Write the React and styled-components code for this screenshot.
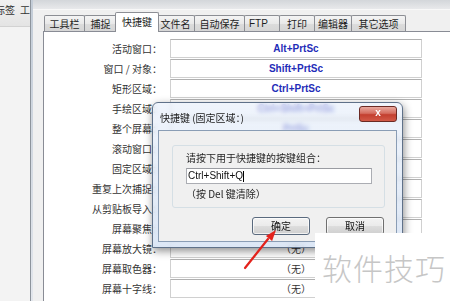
import React from "react";
import styled, { createGlobalStyle } from "styled-components";

const cjk = `"Noto Sans CJK SC", "Liberation Sans", sans-serif`;
const latin = `"Liberation Sans", "Noto Sans CJK SC", sans-serif`;

const GlobalStyle = createGlobalStyle`
  html, body { margin: 0; padding: 0; background: #f3f3f3; }
  body { font-family: ${cjk}; font-size: 10px; }
`;

const tabs = [
  { name: "工具栏", w: 41 },
  { name: "捕捉", w: 33 },
  { name: "快捷键", w: 44, active: true },
  { name: "文件名", w: 39 },
  { name: "自动保存", w: 51 },
  { name: "FTP", w: 36, left: true },
  { name: "打印", w: 36 },
  { name: "编辑器", w: 38 },
  { name: "其它选项", w: 55 },
];

const rows = [
  ["活动窗口：", "Alt+PrtSc"],
  ["窗口 / 对象：", "Shift+PrtSc"],
  ["矩形区域：", "Ctrl+PrtSc"],
  ["手绘区域：", "Ctrl+Shift+PrtSc"],
  ["整个屏幕：", "PrtSc"],
  ["滚动窗口：", null],
  ["固定区域：", null],
  ["重复上次捕捉：", null],
  ["从剪贴板导入：", null],
  ["屏幕聚焦：", null],
  ["屏幕放大镜：", null],
  ["屏幕取色器：", null],
  ["屏幕十字线：", null],
];

const Page = styled.div`
  position: relative;
  display: flex;
  width: 450px;
  height: 301px;
  overflow: hidden;
  background: #f3f3f3;
  font-family: ${cjk};
  font-size: 10px;
  color: #2a2a2a;
`;

const LeftStrip = styled.div`
  width: 30px;
  flex-shrink: 0;
  display: flex;
  flex-direction: column;
  overflow: hidden;
`;

const LeftBar = styled.div`
  height: 27px;
  box-sizing: border-box;
  padding-top: 3px;
  display: flex;
  gap: 5px;
  margin-left: -5px;
  white-space: nowrap;
  line-height: 14px;
  color: #333;
  background: linear-gradient(#f2f2f2, #e4e4e4);
  border-bottom: 1px solid #d2d2d2;
`;

const WindowEdge = styled.div`
  width: 2px;
  flex-shrink: 0;
  border-left: 1px solid #8d949c;
  background: linear-gradient(#c3ccd7, #e2e6ec);
`;

const Window = styled.div`
  flex: 1;
  min-width: 0;
  display: flex;
  flex-direction: column;
  background: #f0f0f0;
`;

const TitleBottom = styled.div`
  height: 9px;
  background: linear-gradient(#d3d6da, #e8e9eb);
  border-bottom: 1px solid #f8f8f8;
`;

const Face = styled.div`
  flex: 1;
  display: flex;
  flex-direction: column;
  padding-left: 10px;
`;

const TabStrip = styled.div`
  height: 21px;
  display: flex;
  align-items: flex-end;
  padding-left: 2px;
`;

const Tab = styled.div`
  position: relative;
  box-sizing: border-box;
  width: ${(p) => p.$w}px;
  height: ${(p) => (p.$active ? 20 : 16)}px;
  margin: ${(p) => (p.$active ? "0 -2px -1px -2px" : "0 0 0 -1px")};
  z-index: ${(p) => (p.$active ? 2 : 1)};
  border: 1px solid #8c8e94;
  border-bottom: none;
  border-radius: 2px 2px 0 0;
  background: ${(p) =>
    p.$active ? "#ffffff" : "linear-gradient(#f4f4f4, #e9e9e9 50%, #dcdcdc 51%, #d6d6d6)"};
  display: flex;
  align-items: center;
  justify-content: ${(p) => (p.$left ? "flex-start" : "center")};
  padding-left: ${(p) => (p.$left ? 4 : 0)}px;
  padding-bottom: ${(p) => (p.$active ? 2 : 0)}px;
  font-family: ${(p) => (p.$left ? latin : cjk)};
  line-height: 14px;
  color: #1e1e1e;
  white-space: nowrap;
`;

const Panel = styled.div`
  flex: 1;
  background: #ffffff;
  border-top: 1px solid #898c95;
  border-left: 1px solid #898c95;
  padding-top: 7px;
`;

const Row = styled.div`
  display: grid;
  grid-template-columns: 126px 252px;
  height: 19px;
  margin-bottom: 1px;
`;

const Label = styled.div`
  text-align: right;
  padding-right: 8px;
  line-height: 19px;
  white-space: nowrap;
  color: #333;
`;

const Field = styled.div`
  box-sizing: border-box;
  border: 1px solid #d0d0d0;
  border-top-color: #b0b0b0;
  text-align: center;
  line-height: 17px;
  font-family: ${(p) => (p.$empty ? cjk : latin)};
  font-weight: ${(p) => (p.$empty ? 400 : 700)};
  color: ${(p) => (p.$empty ? "#333" : "#1f2db8")};
`;

const Dialog = styled.div`
  position: absolute;
  left: 152px;
  top: 102px;
  width: 251px;
  height: 146px;
  box-sizing: border-box;
  border: 1px solid #5f7189;
  border-radius: 6px 6px 0 0;
  background: linear-gradient(rgba(230, 238, 250, 0.62), rgba(212, 225, 243, 0.8));
  backdrop-filter: blur(2px);
  box-shadow: 1px 3px 8px rgba(0, 0, 0, 0.45);
  display: flex;
  flex-direction: column;
  padding: 0 5px 5px;
`;

const TitleBar = styled.div`
  height: 27px;
  display: flex;
  justify-content: space-between;
  align-items: flex-start;
`;

const Title = styled.div`
  padding: 8px 0 0 2px;
  line-height: 14px;
  color: #1a1a1a;
  white-space: nowrap;
`;

const CloseButton = styled.div`
  margin-top: 3px;
  width: 38px;
  height: 16px;
  box-sizing: border-box;
  border: 1px solid #6b2a24;
  border-radius: 3px;
  background: linear-gradient(#e9a99f, #d56d5f 45%, #c33f2f 55%, #d25a48);
  display: flex;
  align-items: center;
  justify-content: center;
  font-family: ${latin};
  font-weight: 700;
  font-size: 10px;
  color: #ffffff;
  line-height: 10px;
  padding-bottom: 2px;
`;

const Client = styled.div`
  flex: 1;
  background: #f0f0f0;
  border: 1px solid #8a9db5;
  padding: 14px 11px 0 13px;
  display: flex;
  flex-direction: column;
`;

const Group = styled.div`
  height: 63px;
  box-sizing: border-box;
  border: 1px solid #d5dfe5;
  border-radius: 3px;
  padding: 5px 13px 0;
  line-height: 14px;
  color: #1e1e1e;
`;

const KeyInput = styled.div`
  margin-top: 3px;
  width: 186px;
  height: 16px;
  box-sizing: border-box;
  border: 1px solid #abadb3;
  border-top-color: #9a9ca2;
  background: #ffffff;
  padding-left: 1px;
  display: flex;
  align-items: center;
  font-family: ${latin};
  color: #111;
`;

const Caret = styled.span`
  display: inline-block;
  width: 1px;
  height: 11px;
  background: #000;
`;

const Hint = styled.div`
  margin-top: 3px;
  white-space: nowrap;
`;

const ButtonRow = styled.div`
  margin-top: 9px;
  display: flex;
  justify-content: flex-end;
  gap: 16px;
  padding-right: 1px;
`;

const Button = styled.div`
  width: 58px;
  height: 18px;
  box-sizing: border-box;
  border: 1px solid ${(p) => (p.$default ? "#5a6a7e" : "#707070")};
  border-radius: 3px;
  background: linear-gradient(#f3f3f3, #ebebeb 48%, #dddddd 52%, #cfcfcf);
  box-shadow: inset 0 0 0 1px rgba(255, 255, 255, 0.7);
  display: flex;
  align-items: center;
  justify-content: center;
  line-height: 14px;
  color: #111;
`;

const Arrow = styled.svg`
  position: absolute;
  left: 240px;
  top: 225px;
  width: 42px;
  height: 48px;
  pointer-events: none;
`;

const Watermark = styled.div`
  position: absolute;
  left: 315px;
  top: 233px;
  width: 135px;
  height: 68px;
  box-sizing: border-box;
  background: #ffffff;
  padding-left: 7px;
  font-size: 30px;
  font-weight: 300;
  letter-spacing: 1px;
  line-height: 68px;
  color: #c6c6c6;
  white-space: nowrap;
`;

export default function App() {
  return (
    <>
      <GlobalStyle />
      <Page>
        <LeftStrip>
          <LeftBar>
            <span>标签</span>
            <span>工</span>
          </LeftBar>
        </LeftStrip>
        <WindowEdge />
        <Window>
          <TitleBottom />
          <Face>
            <TabStrip>
              {tabs.map((t) => (
                <Tab key={t.name} $w={t.w} $active={t.active} $left={t.left}>
                  {t.name}
                </Tab>
              ))}
            </TabStrip>
            <Panel>
              {rows.map(([label, value]) => (
                <Row key={label}>
                  <Label>{label}</Label>
                  <Field $empty={!value}>{value || "（无）"}</Field>
                </Row>
              ))}
            </Panel>
          </Face>
        </Window>

        <Dialog>
          <TitleBar>
            <Title>快捷键 (固定区域：)</Title>
            <CloseButton>x</CloseButton>
          </TitleBar>
          <Client>
            <Group>
              <div>请按下用于快捷键的按键组合：</div>
              <KeyInput>
                Ctrl+Shift+Q
                <Caret />
              </KeyInput>
              <Hint>（按 Del 键清除）</Hint>
            </Group>
            <ButtonRow>
              <Button $default>确定</Button>
              <Button>取消</Button>
            </ButtonRow>
          </Client>
        </Dialog>

        <Arrow viewBox="0 0 42 48">
          <path d="M5 43 L28 14" stroke="#e3221c" strokeWidth="2.2" strokeLinecap="round" />
          <polygon points="36,5 32.1,16 25.9,11" fill="#e3221c" />
        </Arrow>

        <Watermark>软件技巧</Watermark>
      </Page>
    </>
  );
}
